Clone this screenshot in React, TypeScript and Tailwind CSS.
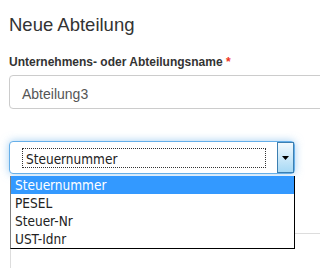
import React from "react";

export default function App() {
  const options = ["Steuernummer", "PESEL", "Steuer-Nr", "UST-Idnr"];
  return (
    <div className="relative w-[320px] h-[268px] overflow-hidden bg-white font-['Liberation_Sans',Arial,sans-serif]">
      <div className="pl-[9px] pt-[15px]">
        <h1 className="text-[18.5px] leading-[20px] text-[#333] font-normal">Neue Abteilung</h1>
        <label className="block mt-[20px] text-[12px] leading-[14px] font-bold text-[#333]">
          Unternehmens- oder Abteilungsname <span className="text-[#e32]">*</span>
        </label>
        <div className="mt-[6px] w-[330px] h-[34px] border border-[#ccc] rounded-[4px] pl-[12px] pt-[8px] text-[14px] leading-[20px] text-[#555]">
          Abteilung3
        </div>
        <div className="relative mt-[32px] w-[286px] h-[33px]">
          <div className="flex h-full border border-[#66afe9] rounded-[4px] bg-white shadow-[0_0_8px_rgba(102,175,233,0.6)] font-['DejaVu_Sans_Condensed','DejaVu_Sans',sans-serif]">
            <div className="flex-1 pl-[12px] pt-[6px]">
              <div className="w-[244px] h-[20px] border border-dotted border-[#333] pl-[3px] pt-[2px] text-[13.5px] leading-[16px] text-[#222]">
                Steuernummer
              </div>
            </div>
            <div className="w-[17px] h-full border border-[#3c7fb1] bg-gradient-to-b from-[#f2f9fd] to-[#a7d9f5] flex items-center justify-center">
              <svg width="7" height="4" viewBox="0 0 7 4">
                <polygon points="0,0 7,0 3.5,4" fill="#000" />
              </svg>
            </div>
          </div>
          <div className="absolute left-[1px] top-[35px] w-[285px] bg-white border-l border-l-[#808080] border-r border-b border-black font-['DejaVu_Sans_Condensed','DejaVu_Sans',sans-serif] text-[13.5px] leading-[18px]">
            {options.map((o, i) => (
              <div
                key={o}
                className={
                  i === 0
                    ? "h-[18px] pl-[4px] bg-[#3399ff] text-white"
                    : "h-[18px] pl-[4px] text-[#222]"
                }
              >
                {o}
              </div>
            ))}
          </div>
        </div>
        <div className="ml-[1px] mt-[59px] h-[40px] border-t border-l border-[#ddd]" />
      </div>
    </div>
  );
}
